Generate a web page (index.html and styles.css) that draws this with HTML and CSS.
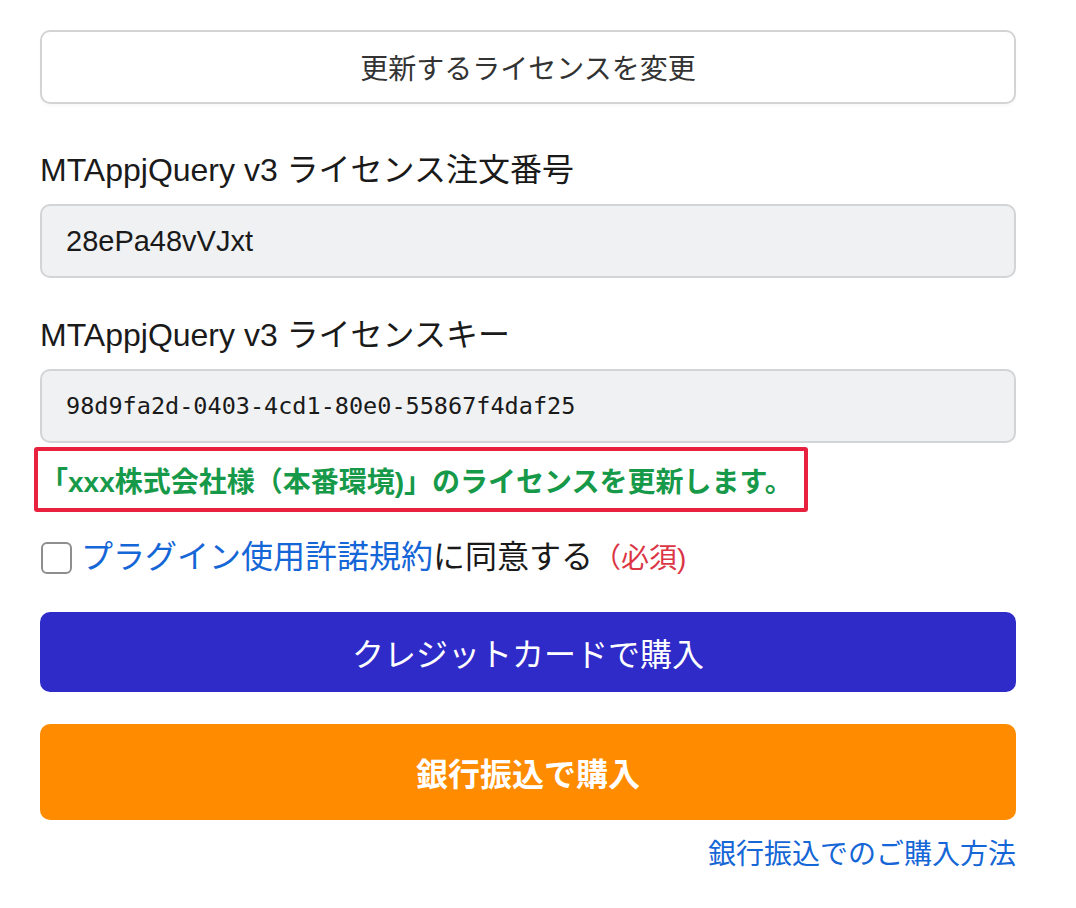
FILE: index.html
```html
<!DOCTYPE html>
<html lang="ja">
<head>
<meta charset="utf-8">
<title>ライセンス更新</title>
<link rel="stylesheet" href="styles.css">
</head>
<body>
<div class="wrap">
  <button class="btn btn-outline" type="button">更新するライセンスを変更</button>

  <div class="field field-first">
    <label class="label">MTAppjQuery v3 ライセンス注文番号</label>
    <div class="input">28ePa48vVJxt</div>
  </div>

  <div class="field">
    <label class="label">MTAppjQuery v3 ライセンスキー</label>
    <div class="input input-mono">98d9fa2d-0403-4cd1-80e0-55867f4daf25</div>
  </div>

  <div class="notice"><span class="notice-text">「xxx株式会社様（本番環境)」のライセンスを更新します。</span></div>

  <div class="agree">
    <span class="checkbox"></span>
    <span class="agree-text"><a class="link" href="#">プラグイン使用許諾規約</a>に同意する<span class="required">（必須)</span></span>
  </div>

  <button class="btn btn-card" type="button">クレジットカードで購入</button>
  <button class="btn btn-bank" type="button">銀行振込で購入</button>

  <div class="howto"><a class="link" href="#">銀行振込でのご購入方法</a></div>
</div>
</body>
</html>
```

FILE: styles.css
```css
html, body {
  margin: 0;
  padding: 0;
  background: #ffffff;
}

body {
  font-family: "Liberation Sans", "Noto Sans CJK JP", sans-serif;
  color: #1a1a1a;
}

.wrap {
  width: 976px;
  margin-left: 40px;
  padding-top: 30px;
  display: flex;
  flex-direction: column;
}

.btn {
  display: block;
  width: 100%;
  border-radius: 10px;
  font-family: "Liberation Sans", "Noto Sans CJK JP", sans-serif;
  text-align: center;
  cursor: pointer;
  padding: 0;
}

.btn-outline {
  height: 74px;
  background: #ffffff;
  border: 2px solid #d3d4d6;
  color: #333333;
  font-size: 28px;
  box-shadow: 0 2px 3px rgba(0, 0, 0, 0.03);
}

.field {
  display: flex;
  flex-direction: column;
  gap: 14px;
  margin-top: 37px;
}

.field-first {
  margin-top: 46px;
}

.label {
  font-size: 32px;
  line-height: 40px;
  color: #1a1a1a;
}

.input {
  height: 74px;
  box-sizing: border-box;
  background: #f0f1f3;
  border: 2px solid #d3d4d6;
  border-radius: 10px;
  padding: 0 24px;
  display: flex;
  align-items: center;
  font-size: 29px;
  color: #1a1a1a;
}

.input-mono {
  font-family: "DejaVu Sans Mono", "Liberation Mono", monospace;
  font-size: 23.5px;
}

.notice {
  margin-top: 4px;
  margin-left: -6px;
  width: 774px;
  height: 65px;
  box-sizing: border-box;
  border: 4px solid #e8213f;
  border-radius: 3px;
  display: flex;
  align-items: center;
  padding-left: 2px;
  white-space: nowrap;
}

.notice-text {
  color: #17994a;
  font-weight: bold;
  font-size: 28px;
  white-space: nowrap;
}

.agree {
  margin-top: 26px;
  display: flex;
  align-items: center;
  gap: 9px;
  height: 40px;
}

.checkbox {
  width: 27px;
  height: 28px;
  border: 2px solid #8e8e8e;
  border-radius: 6px;
  background: #ffffff;
  flex: none;
  margin-left: 1px;
}

.agree-text {
  font-size: 32px;
  line-height: 40px;
  color: #1a1a1a;
}

.link {
  color: #1566d6;
  text-decoration: none;
}

.required {
  color: #dc3545;
  font-size: 28px;
}

.btn-card {
  margin-top: 34px;
  height: 80px;
  background: #2e2bc9;
  border: none;
  color: #ffffff;
  font-size: 32px;
}

.btn-bank {
  margin-top: 32px;
  height: 96px;
  background: #ff8c00;
  border: none;
  color: #ffffff;
  font-size: 32px;
  font-weight: bold;
}

.howto {
  margin-top: 15px;
  text-align: right;
  font-size: 28px;
  line-height: 40px;
}
```
